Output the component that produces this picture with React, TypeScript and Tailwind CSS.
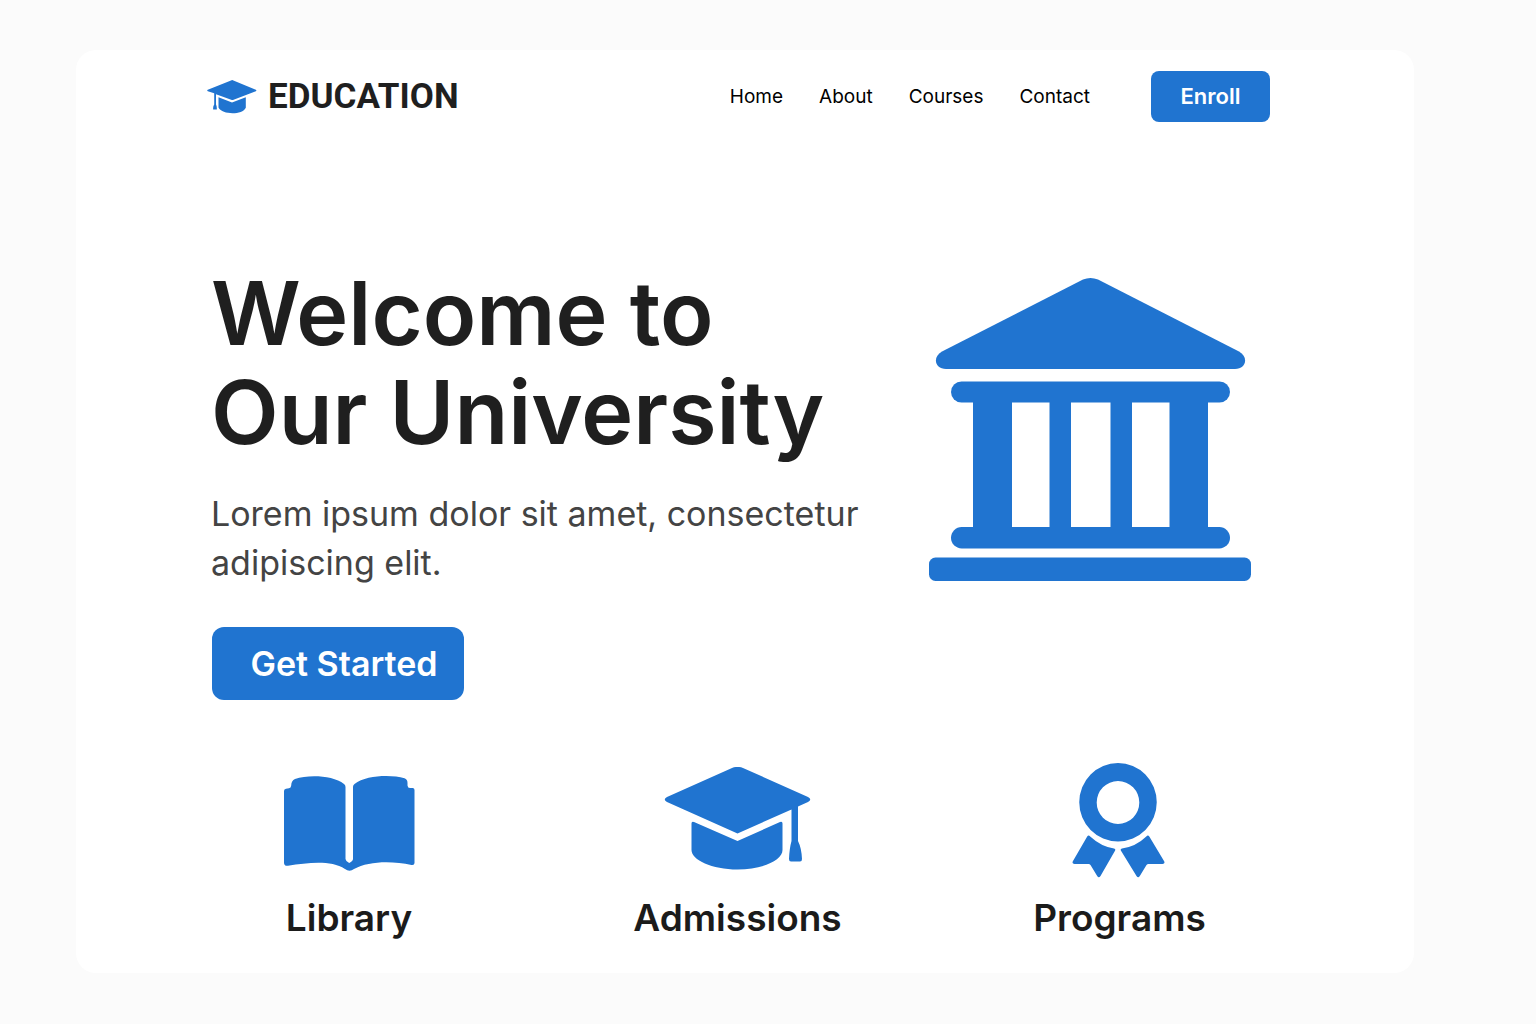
import type { ReactNode } from 'react';

const NAV_LINKS = ['Home', 'About', 'Courses', 'Contact'];

function LogoIcon() {
  return (
    <svg viewBox="0 0 50 34" className="w-[50px] h-[34px] fill-[#2074d0]" aria-hidden="true">
      <path d="M24 .4q1.200-.6 2.400 0L48.800 9.800q1.200.7 0 1.400L26.600 19.800q-1.200.6-2.400 0L9 14.200V24.500q1 2 .8 5H6.200q-.4-3 1-5V13.300L.8 11.200q-1.200-.7 0-1.400z" />
      <path d="M11.500 17.200l13.500 5.400L38.800 17.200v10.500C37 31.500 31.500 33.200 25.500 33.200S13.500 31.500 11.500 27.500z" />
    </svg>
  );
}

function BuildingIcon() {
  return (
    <svg viewBox="0 0 322 303" className="w-[322px] h-[303px] shrink-0 fill-[#2074d0]" aria-hidden="true">
      <path d="M154 1.500Q161.500-1.500 169 1.500L310 73.500C320 79 317 91 306 91H17C6 91 3 79 13 73.500z" />
      <rect x="22" y="103.500" width="279" height="21" rx="10.500" />
      <rect x="44" y="120" width="39" height="134" />
      <rect x="120.500" y="120" width="21.500" height="134" />
      <rect x="181.500" y="120" width="21.500" height="134" />
      <rect x="240.500" y="120" width="38.500" height="134" />
      <rect x="22" y="249" width="279" height="21.500" rx="10.700" />
      <rect x="0" y="279.500" width="322" height="23.500" rx="6.500" />
    </svg>
  );
}

function BookIcon() {
  return (
    <svg viewBox="0 -8 131 104" className="w-[131px] h-[104px] fill-[#2074d0]" aria-hidden="true">
      <path d="M0 15Q0 13 2 12.700L5 12.300Q7 12 7.200 9.500Q7.300 4.500 11 3C25-1.500 49-.5 60 8Q61.500 9 61.500 11V83Q61.500 85 65.200 87Q69 85 69 83V11Q69 9 70.500 8C82-.8 107-1.500 120.500 2.300Q123.500 3.300 123.500 7V9.500Q123.700 12 126 12H129Q130.500 12.300 130.500 14V87Q130.500 89.500 127.500 89C108 84.500 84 85 70 93Q65.500 96.500 61 93C47 84 25 86.500 4 89.800Q0 90.300 0 86.500z" />
    </svg>
  );
}

function CapIcon() {
  return (
    <svg viewBox="0 0 147 106" className="w-[147px] h-[106px] fill-[#2074d0]" aria-hidden="true">
      <path d="M68 1Q73.500 -1.200 79 1L144 30Q148.500 32.500 144 35L134 39.500V74Q137.500 81 138 92Q138 94.500 136 94.500H127Q125 94.500 125 92Q125.500 81 127.500 74V42.500L73.500 66.500L3 35Q-1.500 32.500 3 30z" />
      <path d="M27.500 56.500Q27.500 54 30 55L73.500 74L116 55Q118.500 54 118.500 56.500V83C118.500 93 99 102.500 73.500 102.500S27.500 93 27.500 83z" />
    </svg>
  );
}

function RibbonIcon() {
  return (
    <svg viewBox="0 0 95 115" className="w-[95px] h-[115px] fill-[#2074d0]" aria-hidden="true">
      <path fillRule="evenodd" d="M46 0a38.500 39 0 1 1 0 78.500a38.500 39 0 1 1 0-78.500zM46 18a21.300 21.500 0 1 0 0 43a21.300 21.500 0 1 0 0-43z" />
      <path d="M15.200 73.500q1.300-2 3 0Q29 83.500 42 85.500q2 .3 1 2.300L28.500 113q-1.700 2.500-3.300 0L18.500 102q-.7-1-2-1H2.500Q-.5 100.500 1 98z" />
      <path d="M77.300 73.500q-1.300-2-3 0Q64 83.500 50 85.500q-2 .3-1 2.300L64.500 113q1.700 2.500 3.300 0L74.500 102q.7-1 2-1H90.500Q93.500 100.500 92 98z" />
    </svg>
  );
}

function Feature({ label, children }: { label: string; children: ReactNode }) {
  return (
    <div className="flex flex-col items-center">
      <div className="h-[116px] flex items-center">{children}</div>
      <h2 className="mt-4 text-[37px] leading-[48px] font-semibold text-[#1b1b1b]">{label}</h2>
    </div>
  );
}

export default function App() {
  return (
    <div className="min-h-screen bg-[#fbfbfb] pt-[50px] pb-[51px] pl-[76px] pr-[122px] font-['Inter',sans-serif]">
      <div className="bg-white rounded-[20px] pt-[21px] pb-[31px]">
        {/* Header */}
        <header className="flex items-center pl-[131px] pr-36">
          <a href="#" className="flex items-center gap-[11px]">
            <LogoIcon />
            <span className="font-['Roboto',sans-serif] text-[35px] leading-10 font-bold text-[#1f1f1f]">EDUCATION</span>
          </a>
          <nav className="ml-auto flex gap-9">
            {NAV_LINKS.map((link) => (
              <a key={link} href="#" className="text-[19px] leading-7 text-black">
                {link}
              </a>
            ))}
          </nav>
          <button className="ml-[61px] w-[119px] h-[51px] rounded-lg bg-[#2074d0] text-[22px] font-semibold text-white">
            Enroll
          </button>
        </header>

        {/* Hero */}
        <section className="mt-[142px] flex items-start justify-between pl-[135px] pr-[163px]">
          <div>
            <h1 className="text-[88px] leading-[99px] font-semibold text-[#1f1f1f] whitespace-nowrap">
              Welcome to
              <br />
              Our University
            </h1>
            <p className="mt-[27px] text-[34px] leading-[49px] text-[#444444] whitespace-nowrap">
              Lorem ipsum dolor sit amet, consectetur
              <br />
              adipiscing elit.
            </p>
            <button className="mt-10 ml-px w-[252px] h-[73px] rounded-xl bg-[#2074d0] pl-3 text-[34px] font-semibold text-white">
              Get Started
            </button>
          </div>
          <div className="pt-[14px]">
            <BuildingIcon />
          </div>
        </section>

        {/* Features */}
        <section className="mt-[62px] grid grid-cols-[388fr_389fr_375fr] pl-[79px] pr-[107px]">
          <Feature label="Library">
            <BookIcon />
          </Feature>
          <Feature label="Admissions">
            <CapIcon />
          </Feature>
          <Feature label="Programs">
            <RibbonIcon />
          </Feature>
        </section>
      </div>
    </div>
  );
}
